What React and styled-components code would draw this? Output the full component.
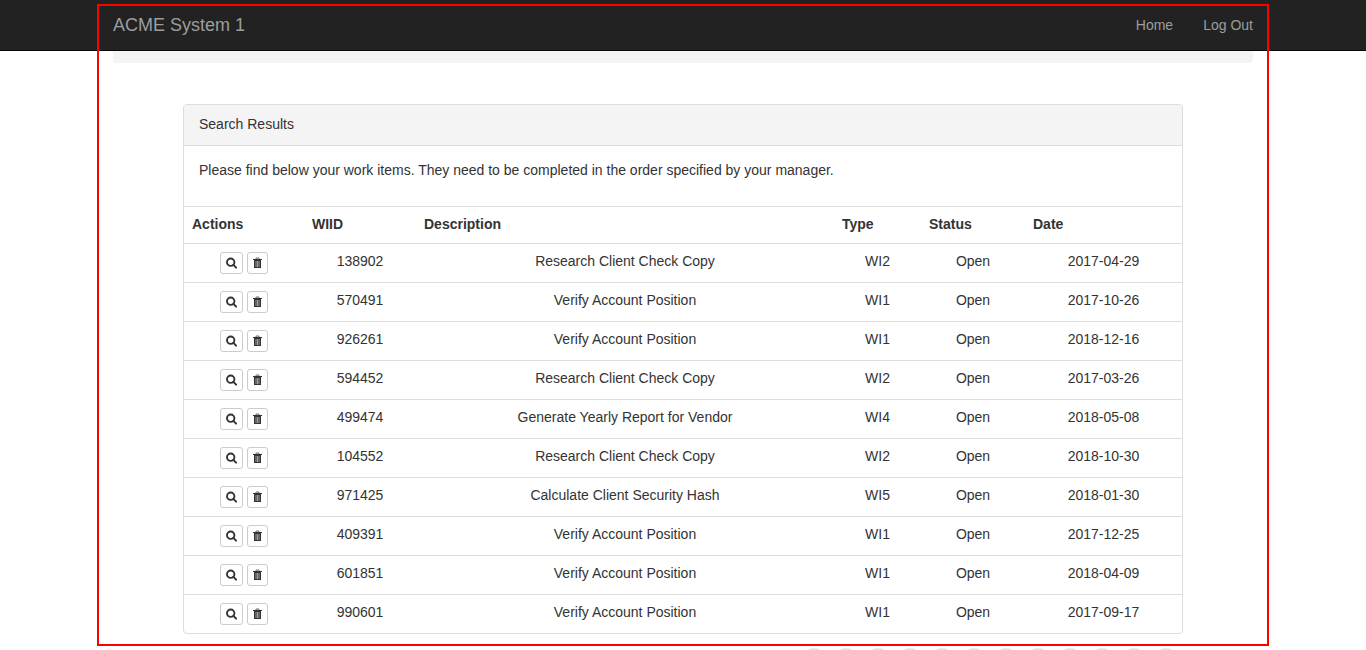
import React from "react";
import styled, { createGlobalStyle } from "styled-components";

const GlobalStyle = createGlobalStyle`
  *, *::before, *::after { box-sizing: border-box; }
  html, body, #root { height: 100%; }
  body {
    margin: 0;
    overflow: hidden;
    background: #fff;
    color: #333;
    font: 14px/20px "Liberation Sans", Arial, Helvetica, sans-serif;
  }
`;

const Page = styled.div`
  position: relative;
  height: 100%;
  overflow: hidden;
`;

const Navbar = styled.nav`
  background: #222;
  border-bottom: 1px solid #080808;
`;

const Container = styled.div`
  width: 100%;
  max-width: 1170px;
  margin: 0 auto;
  padding: 0 15px;
`;

const NavInner = styled(Container)`
  display: flex;
  justify-content: space-between;
`;

const Brand = styled.a`
  padding: 15px 0;
  color: #9d9d9d;
  font-size: 18px;
  text-decoration: none;
`;

const NavLinks = styled.div`
  display: flex;
  gap: 30px;
`;

const NavLink = styled.a`
  padding: 15px 0;
  color: #9d9d9d;
  text-decoration: none;
`;

const Banner = styled.div`
  height: 12px;
  background: #f4f4f4;
  border-radius: 0 0 4px 4px;
`;

const Content = styled.main`
  max-width: 1000px;
  margin: 41px auto 0;
`;

const Panel = styled.section`
  border: 1px solid #ddd;
  border-radius: 4px;
`;

const PanelHeading = styled.header`
  padding: 9px 15px 11px;
  background: #f4f4f4;
  border-bottom: 1px solid #ddd;
  border-radius: 3px 3px 0 0;
`;

const PanelText = styled.p`
  margin: 0;
  padding: 14px 15px 26px;
`;

const Table = styled.table`
  width: 100%;
  table-layout: fixed;
  border-collapse: separate;
  border-spacing: 0;
`;

const Col = styled.col`
  width: ${({ $width }) => $width};
`;

const HeadCell = styled.th`
  padding: 7px 8px 9px;
  border-top: 1px solid #ddd;
  text-align: left;
  font-weight: 700;
`;

const Cell = styled.td`
  padding: 7px 8px 9px;
  border-top: 1px solid #ddd;
  text-align: center;
  vertical-align: top;
`;

const ActionCell = styled(Cell)`
  padding: 8px;
`;

const Actions = styled.div`
  display: flex;
  justify-content: center;
  gap: 4px;
`;

const IconButton = styled.button`
  display: flex;
  align-items: center;
  justify-content: center;
  width: ${({ $width }) => $width};
  height: 22px;
  padding: 0;
  background: #fff;
  border: 1px solid #ccc;
  border-radius: 3px;
  color: #333;
  cursor: pointer;
`;

const Pagination = styled.nav`
  display: flex;
  justify-content: flex-end;
  gap: 6px;
  padding: 14px 4px 0 0;
`;

const PageDot = styled.button`
  width: 26px;
  height: 26px;
  padding: 0;
  border: 0;
  border-radius: 50%;
  background: #e6e6e8;
`;

const Highlight = styled.div`
  position: absolute;
  top: 4px;
  bottom: 4px;
  left: 50%;
  width: 100%;
  max-width: 1172px;
  transform: translateX(-50%);
  border: 2px solid #f00;
  pointer-events: none;
`;

const SearchIcon = () => (
  <svg width="11" height="12" viewBox="0 0 11 12" aria-hidden="true">
    <circle cx="4.7" cy="5.2" r="3.7" fill="none" stroke="currentColor" strokeWidth="1.9" />
    <path d="M7.4 7.9 10.1 10.6" stroke="currentColor" strokeWidth="2" strokeLinecap="round" />
  </svg>
);

const TrashIcon = () => (
  <svg width="9" height="12" viewBox="0 0 9 12" aria-hidden="true">
    <path d="M3 2V1h3v1" fill="none" stroke="currentColor" strokeOpacity="0.7" />
    <path d="M0 2h9v1H0zM1 3h7v8H1z" fill="currentColor" />
    <path d="M3 4v6M4.5 4v6M6 4v6" stroke="#fff" strokeOpacity="0.65" strokeWidth="0.8" />
  </svg>
);

const columns = [
  ["Actions", "120px"],
  ["WIID", "112px"],
  ["Description", "auto"],
  ["Type", "87px"],
  ["Status", "104px"],
  ["Date", "157px"],
];

const items = [
  ["138902", "Research Client Check Copy", "WI2", "Open", "2017-04-29"],
  ["570491", "Verify Account Position", "WI1", "Open", "2017-10-26"],
  ["926261", "Verify Account Position", "WI1", "Open", "2018-12-16"],
  ["594452", "Research Client Check Copy", "WI2", "Open", "2017-03-26"],
  ["499474", "Generate Yearly Report for Vendor", "WI4", "Open", "2018-05-08"],
  ["104552", "Research Client Check Copy", "WI2", "Open", "2018-10-30"],
  ["971425", "Calculate Client Security Hash", "WI5", "Open", "2018-01-30"],
  ["409391", "Verify Account Position", "WI1", "Open", "2017-12-25"],
  ["601851", "Verify Account Position", "WI1", "Open", "2018-04-09"],
  ["990601", "Verify Account Position", "WI1", "Open", "2017-09-17"],
];

const pages = Array.from({ length: 12 }, (_, i) => i + 1);

export default function App() {
  return (
    <Page>
      <GlobalStyle />
      <Navbar>
        <NavInner>
          <Brand href="#">ACME System 1</Brand>
          <NavLinks>
            <NavLink href="#home">Home</NavLink>
            <NavLink href="#logout">Log Out</NavLink>
          </NavLinks>
        </NavInner>
      </Navbar>
      <Container>
        <Banner />
        <Content>
          <Panel>
            <PanelHeading>Search Results</PanelHeading>
            <PanelText>
              Please find below your work items. They need to be completed in the order specified by your manager.
            </PanelText>
            <Table>
              <colgroup>
                {columns.map(([name, width]) => (
                  <Col key={name} $width={width} />
                ))}
              </colgroup>
              <thead>
                <tr>
                  {columns.map(([name]) => (
                    <HeadCell key={name} scope="col">{name}</HeadCell>
                  ))}
                </tr>
              </thead>
              <tbody>
                {items.map((item) => (
                  <tr key={item[0]}>
                    <ActionCell>
                      <Actions>
                        <IconButton type="button" $width="23px" aria-label={`View ${item[0]}`}>
                          <SearchIcon />
                        </IconButton>
                        <IconButton type="button" $width="21px" aria-label={`Delete ${item[0]}`}>
                          <TrashIcon />
                        </IconButton>
                      </Actions>
                    </ActionCell>
                    {item.map((value) => (
                      <Cell key={value}>{value}</Cell>
                    ))}
                  </tr>
                ))}
              </tbody>
            </Table>
          </Panel>
          <Pagination aria-label="Pages">
            {pages.map((page) => (
              <PageDot key={page} type="button" aria-label={`Page ${page}`} />
            ))}
          </Pagination>
        </Content>
      </Container>
      <Highlight />
    </Page>
  );
}
